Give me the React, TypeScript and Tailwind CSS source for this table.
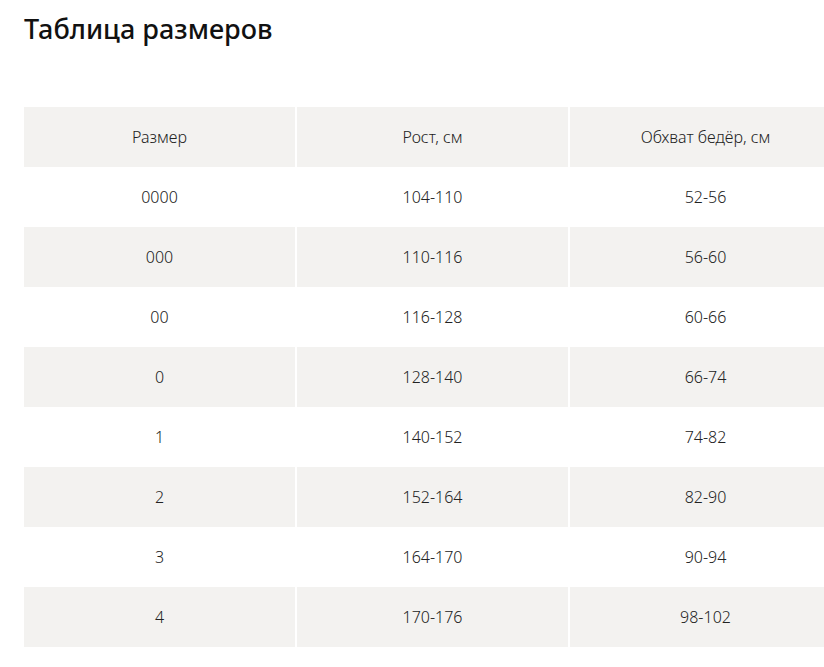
const rows: [string, string, string][] = [
  ['0000', '104-110', '52-56'],
  ['000', '110-116', '56-60'],
  ['00', '116-128', '60-66'],
  ['0', '128-140', '66-74'],
  ['1', '140-152', '74-82'],
  ['2', '152-164', '82-90'],
  ['3', '164-170', '90-94'],
  ['4', '170-176', '98-102'],
];

function Row({ cells, shaded }: { cells: string[]; shaded: boolean }) {
  return (
    <div className="grid grid-cols-[271px_271px_271px] gap-x-[2px]">
      {cells.map((c, i) => (
        <div
          key={i}
          className={`h-[60px] flex items-center justify-center text-[16px] font-light text-[#222] ${shaded ? 'bg-[#f3f2f0]' : 'bg-white'}`}
        >
          {c}
        </div>
      ))}
    </div>
  );
}

export default function App() {
  return (
    <div className="w-[824px] h-[667px] overflow-hidden bg-white font-['Noto_Sans',sans-serif]">
      <h1 className="pl-6 pt-[11px] text-[27px] leading-[36px] font-medium text-[#111]">Таблица размеров</h1>
      <div className="ml-6 mt-[60px] w-[820px]">
        <Row cells={['Размер', 'Рост, см', 'Обхват бедёр, см']} shaded />
        {rows.map((r, i) => (
          <Row key={r[0]} cells={r} shaded={i % 2 === 1} />
        ))}
      </div>
    </div>
  );
}
